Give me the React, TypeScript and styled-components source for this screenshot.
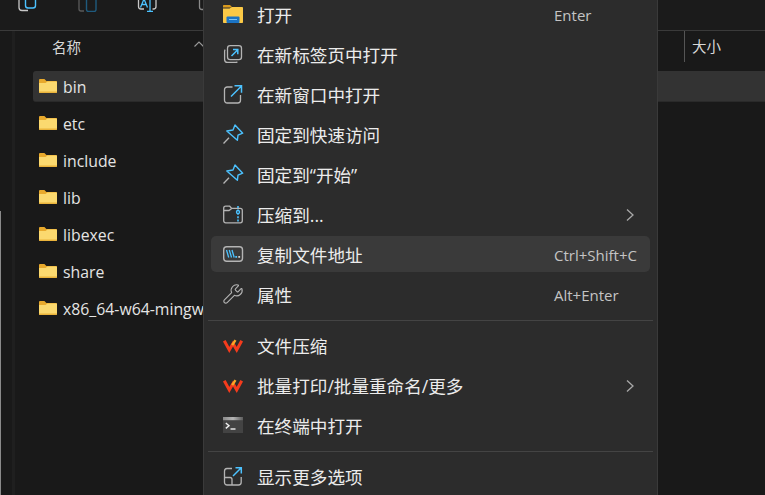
import { ReactNode } from "react";
import { Wrench } from "lucide-react";
import styled, { createGlobalStyle } from "styled-components";

const GRAY = "#b4b4b4";
const BLUE = "#4cc2ff";

const GlobalStyle = createGlobalStyle`
  html, body {
    margin: 0;
    padding: 0;
    background: #191919;
  }
  * {
    box-sizing: border-box;
  }
`;

function FolderIcon() {
  return (
    <svg width="20" height="16" viewBox="0 0 20 16">
      <path d="M1 2.2C1 1.5 1.5 1 2.2 1h4.2l2 2H18c.6 0 1 .4 1 1v2H1z" fill="#e8a92c" />
      <path d="M1 5h6.5l2-1.4H18c.6 0 1 .4 1 1V13.8c0 .6-.4 1-1 1H2c-.6 0-1-.4-1-1z" fill="#fbd96f" />
      <path d="M1 13.6h18v.4c0 .6-.4 1-1 1H2c-.6 0-1-.4-1-1z" fill="#eab33b" />
    </svg>
  );
}

function OpenIcon() {
  return (
    <svg width="22" height="22" viewBox="0 0 22 22">
      <path d="M1 3c0-.6.4-1 1-1h6l2.4 2.4H1z" fill="#d99a1e" />
      <path d="M1 5.4h6.5L10 4h10c.6 0 1 .4 1 1v14c0 .6-.4 1-1 1H2c-.6 0-1-.4-1-1z" fill="#fbc946" />
      <rect x="4.5" y="13.5" width="13" height="6.5" rx="1" fill="#1b74c5" />
      <rect x="7" y="16" width="8" height="1" fill="#7cc4f5" />
    </svg>
  );
}

function NewTabIcon() {
  return (
    <svg width="22" height="22" viewBox="0 0 22 22" fill="none">
      <rect x="5.5" y="2.7" width="14" height="14" rx="2.6" stroke={GRAY} strokeWidth="1.3" />
      <path d="M3.2 6.6A2.6 2.6 0 0 0 2.6 8.4v8a3 3 0 0 0 3 3h8a2.6 2.6 0 0 0 1.8-.7" stroke={GRAY} strokeWidth="1.3" />
      <path d="M9.5 13l6-6M11 6.500h4.800v4.800" stroke={BLUE} strokeWidth="1.500" />
    </svg>
  );
}

function NewWindowIcon() {
  return (
    <svg width="22" height="22" viewBox="0 0 22 22" fill="none">
      <path d="M10.500 4H5.200A2.700 2.700 0 0 0 2.500 6.700v10.600A2.700 2.700 0 0 0 5.200 20h10.600a2.700 2.700 0 0 0 2.700-2.700V12" stroke={GRAY} strokeWidth="1.300" />
      <path d="M9 13.500L19 3.500M12.500 2.800h7v7" stroke={BLUE} strokeWidth="1.500" />
    </svg>
  );
}

function PinIcon() {
  return (
    <svg width="22" height="22" viewBox="0 0 22 22" fill="none">
      <path d="M1.500 20.500L7 14.800" stroke={GRAY} strokeWidth="1.300" />
      <path d="M13 2l7.700 8.200-4.700 2-.6 5L4.800 8l6.200-1z" stroke={BLUE} strokeWidth="1.400" strokeLinejoin="round" />
    </svg>
  );
}

function ZipIcon() {
  return (
    <svg width="22" height="22" viewBox="0 0 22 22" fill="none">
      <path d="M1.700 5.200C1.700 4 2.500 3.200 3.700 3.200h4l2 2.200h8.600c1.200 0 2 .8 2 2v10.400c0 1.200-.8 2-2 2H3.700c-1.200 0-2-.8-2-2z" stroke={GRAY} strokeWidth="1.300" />
      <path d="M2 7.500h5l2.700-2" stroke={GRAY} strokeWidth="1.300" />
      <path d="M16 3v17" stroke={BLUE} strokeWidth="1.600" strokeDasharray="2 1.400" />
      <circle cx="16" cy="9" r="1.600" stroke={BLUE} strokeWidth="1.200" />
    </svg>
  );
}

function CopyPathIcon() {
  return (
    <svg width="22" height="22" viewBox="0 0 22 22" fill="none">
      <rect x="1.700" y="3.700" width="18.800" height="14.600" rx="3" stroke={GRAY} strokeWidth="1.400" />
      <path d="M4.500 7l2.200 7.500M7.300 7l2.200 7.500M10 7l2.200 7.500" stroke={BLUE} strokeWidth="1.300" />
      <rect x="13.300" y="13" width="1.800" height="1.800" fill={BLUE} />
      <rect x="16.300" y="13" width="1.800" height="1.800" fill="#d0d0d0" />
    </svg>
  );
}

function WpsIcon() {
  return (
    <svg width="22" height="22" viewBox="0 0 22 22" fill="none">
      <path d="M2.300 6.800L7.300 16l3.700-6.500 3.700 6.500 5-9.200" stroke="#f53b1c" strokeWidth="3" />
      <path d="M10.200 11.200l3.300-5" stroke="#f9a825" strokeWidth="2.400" />
    </svg>
  );
}

function TerminalIcon() {
  return (
    <svg width="22" height="22" viewBox="0 0 22 22" fill="none">
      <defs>
        <linearGradient id="termbar" x1="0" y1="0" x2="1" y2="0">
          <stop offset="0" stopColor="#8a8a8a" />
          <stop offset="0.5" stopColor="#b5b5b5" />
          <stop offset="1" stopColor="#5c5c5c" />
        </linearGradient>
      </defs>
      <rect x="1" y="3" width="20" height="16" fill="#434343" />
      <rect x="1" y="3" width="20" height="3.200" fill="url(#termbar)" />
      <path d="M3.800 9l3.200 2.700-3.200 2.700" stroke="#f0f0f0" strokeWidth="1.400" />
      <path d="M8.500 15h5" stroke="#f0f0f0" strokeWidth="1.400" />
    </svg>
  );
}

function MoreIcon() {
  return (
    <svg width="22" height="22" viewBox="0 0 22 22" fill="none">
      <path d="M10 3.500H5A2.700 2.700 0 0 0 2.500 6.200v11.300A2.700 2.700 0 0 0 5.200 20h11.300a2.700 2.700 0 0 0 2.700-2.700V12" stroke={GRAY} strokeWidth="1.300" />
      <path d="M2.500 12.500h5.500a2 2 0 0 1 2 2V20" stroke={GRAY} strokeWidth="1.300" />
      <path d="M11 11L19 3M13.500 2.800h5.800v5.800" stroke={BLUE} strokeWidth="1.500" />
    </svg>
  );
}

function Chevron() {
  return (
    <svg width="10" height="14" viewBox="0 0 10 14" fill="none">
      <path d="M2 1.500L8 7l-6 5.500" stroke="#a8a8a8" strokeWidth="1.300" />
    </svg>
  );
}

type MenuEntry = {
  icon: ReactNode;
  label: string;
  shortcut?: string;
  more?: boolean;
  active?: boolean;
  dividerAfter?: boolean;
};

const menuEntries: MenuEntry[] = [
  { icon: <OpenIcon />, label: "打开", shortcut: "Enter" },
  { icon: <NewTabIcon />, label: "在新标签页中打开" },
  { icon: <NewWindowIcon />, label: "在新窗口中打开" },
  { icon: <PinIcon />, label: "固定到快速访问" },
  { icon: <PinIcon />, label: "固定到“开始”" },
  { icon: <ZipIcon />, label: "压缩到...", more: true },
  { icon: <CopyPathIcon />, label: "复制文件地址", shortcut: "Ctrl+Shift+C", active: true },
  { icon: <Wrench size={22} strokeWidth={1.2} color={GRAY} />, label: "属性", shortcut: "Alt+Enter", dividerAfter: true },
  { icon: <WpsIcon />, label: "文件压缩" },
  { icon: <WpsIcon />, label: "批量打印/批量重命名/更多", more: true },
  { icon: <TerminalIcon />, label: "在终端中打开", dividerAfter: true },
  { icon: <MoreIcon />, label: "显示更多选项" },
];

const files = ["bin", "etc", "include", "lib", "libexec", "share", "x86_64-w64-mingw32"];

export default function App() {
  return (
    <>
      <GlobalStyle />
      <Window>
        <Toolbar>
          <ToolIcon>
            <svg width="22" height="22" viewBox="0 0 22 22" fill="none">
              <path d="M2 0v17.500a3 3 0 0 0 3 3h6" stroke="#c8c8c8" strokeWidth="1.300" />
              <rect x="8.500" y="-4" width="10" height="22" rx="2.500" stroke={BLUE} strokeWidth="1.400" />
            </svg>
          </ToolIcon>
          <ToolIcon>
            <svg width="22" height="22" viewBox="0 0 22 22" fill="none">
              <path d="M2 0v19a2 2 0 0 0 2 2h3" stroke="#5a5a5a" strokeWidth="1.300" />
              <rect x="9.500" y="-4" width="9.500" height="25.500" rx="2" stroke="#1f5a7d" strokeWidth="1.400" />
            </svg>
          </ToolIcon>
          <ToolIcon>
            <svg width="22" height="22" viewBox="0 0 22 22" fill="none">
              <path d="M1.500 0v16.500a2.500 2.500 0 0 0 2.500 2.500h3M19 0v16.500a2.500 2.500 0 0 1-2.500 2.500H15.500" stroke="#c8c8c8" strokeWidth="1.300" />
              <path d="M3.500 17.500L7 9l3.500 8.500M4.800 14.500h4.400M13 0v21.500M10 21.500h6" stroke={BLUE} strokeWidth="1.300" />
            </svg>
          </ToolIcon>
          <ToolIcon>
            <svg width="22" height="22" viewBox="0 0 22 22" fill="none">
              <path d="M2.500 0v17a2.500 2.500 0 0 0 2.500 2.500h3" stroke="#8a8a8a" strokeWidth="1.300" />
            </svg>
          </ToolIcon>
        </Toolbar>
        <Body>
          <NavRail>
            <NavThumb />
          </NavRail>
          <FileArea>
            <ColumnHeader>
              <NameColumn>名称</NameColumn>
              <SizeColumn>大小</SizeColumn>
              <SortMark>
                <svg width="10" height="6" viewBox="0 0 10 6" fill="none">
                  <path d="M.5 5.500L5 1l4.500 4.500" stroke="#9a9a9a" strokeWidth="1.100" />
                </svg>
              </SortMark>
            </ColumnHeader>
            <FileList>
              {files.map((name, i) => (
                <FileRow key={name} $selected={i === 0}>
                  <FolderIcon />
                  <FileName>{name}</FileName>
                </FileRow>
              ))}
            </FileList>
          </FileArea>
        </Body>
        <ContextMenu>
          {menuEntries.map((entry) => (
            <div key={entry.label}>
              <MenuItem $active={entry.active}>
                <MenuIcon>{entry.icon}</MenuIcon>
                <MenuLabel>{entry.label}</MenuLabel>
                {entry.shortcut && <Shortcut>{entry.shortcut}</Shortcut>}
                {entry.more && (
                  <MoreArrow>
                    <Chevron />
                  </MoreArrow>
                )}
              </MenuItem>
              {entry.dividerAfter && <Divider />}
            </div>
          ))}
        </ContextMenu>
      </Window>
    </>
  );
}

const Window = styled.div`
  position: relative;
  width: 765px;
  height: 495px;
  overflow: hidden;
  background: #191919;
  color: #e8e8e8;
  font-family: "Open Sans", "Noto Sans CJK SC", sans-serif;
`;

const Toolbar = styled.div`
  display: flex;
  align-items: flex-end;
  gap: 38px;
  height: 31px;
  padding: 0 0 18px 17px;
  border-bottom: 1px solid #3a3a3a;
  background: #1b1b1b;
`;

const ToolIcon = styled.div`
  width: 22px;
  height: 22px;
  flex: none;
`;

const Body = styled.div`
  display: flex;
  height: 464px;
`;

const NavRail = styled.div`
  position: relative;
  width: 15px;
  flex: none;
  border-right: 3px solid #1f1f1f;
  margin-right: 18px;
`;

const NavThumb = styled.div`
  position: absolute;
  left: 0;
  top: 180px;
  bottom: 0;
  width: 1px;
  background: #8a8a8a;
`;

const FileArea = styled.div`
  flex: 1;
  min-width: 0;
`;

const ColumnHeader = styled.div`
  position: relative;
  display: flex;
  align-items: center;
  height: 31px;
  margin-bottom: 9px;
  font-size: 14.500px;
  color: #d8d8d8;
`;

const NameColumn = styled.div`
  margin-left: 19px;
  width: 632px;
`;

const SizeColumn = styled.div`
  height: 31px;
  line-height: 32px;
  padding-left: 7px;
  border-left: 1px solid #555;
`;

const SortMark = styled.div`
  position: absolute;
  left: 161px;
  top: 1px;
`;

const FileList = styled.div`
  display: flex;
  flex-direction: column;
  gap: 6px;
`;

const FileRow = styled.div<{ $selected?: boolean }>`
  display: flex;
  align-items: center;
  gap: 5px;
  height: 31px;
  padding-left: 5px;
  border-radius: 3px 0 0 3px;
  background: ${(p) => (p.$selected ? "#333333" : "transparent")};
  border-bottom: 1px solid ${(p) => (p.$selected ? "#2a2a2a" : "transparent")};
`;

const FileName = styled.span`
  padding-top: 2px;
  font-size: 15.800px;
  color: #e4e4e4;
  white-space: nowrap;
`;

const ContextMenu = styled.div`
  position: absolute;
  left: 203px;
  top: -4px;
  width: 455px;
  height: 520px;
  padding: 0 4px;
  background: #2c2c2c;
  border-left: 1px solid #3a3a3a;
  border-right: 1px solid #3a3a3a;
`;

const MenuItem = styled.div<{ $active?: boolean }>`
  display: grid;
  grid-template-columns: 22px 310px 1fr;
  align-items: center;
  position: relative;
  height: 36px;
  margin: 0 3px 4px;
  padding-left: 11px;
  border-radius: 5px;
  background: ${(p) => (p.$active ? "#3a3a3a" : "transparent")};
`;

const MenuIcon = styled.div`
  display: flex;
  width: 22px;
  height: 22px;
`;

const MenuLabel = styled.div`
  padding-left: 13px;
  font-size: 17.600px;
  color: #ececec;
  white-space: nowrap;
`;

const Shortcut = styled.div`
  padding-top: 2px;
  font-size: 15px;
  color: #c4c4c4;
  white-space: nowrap;
`;

const MoreArrow = styled.div`
  position: absolute;
  right: 15px;
  top: 12px;
  display: flex;
`;

const Divider = styled.div`
  height: 1px;
  margin: 8px 0 6px;
  background: #444;
`;
